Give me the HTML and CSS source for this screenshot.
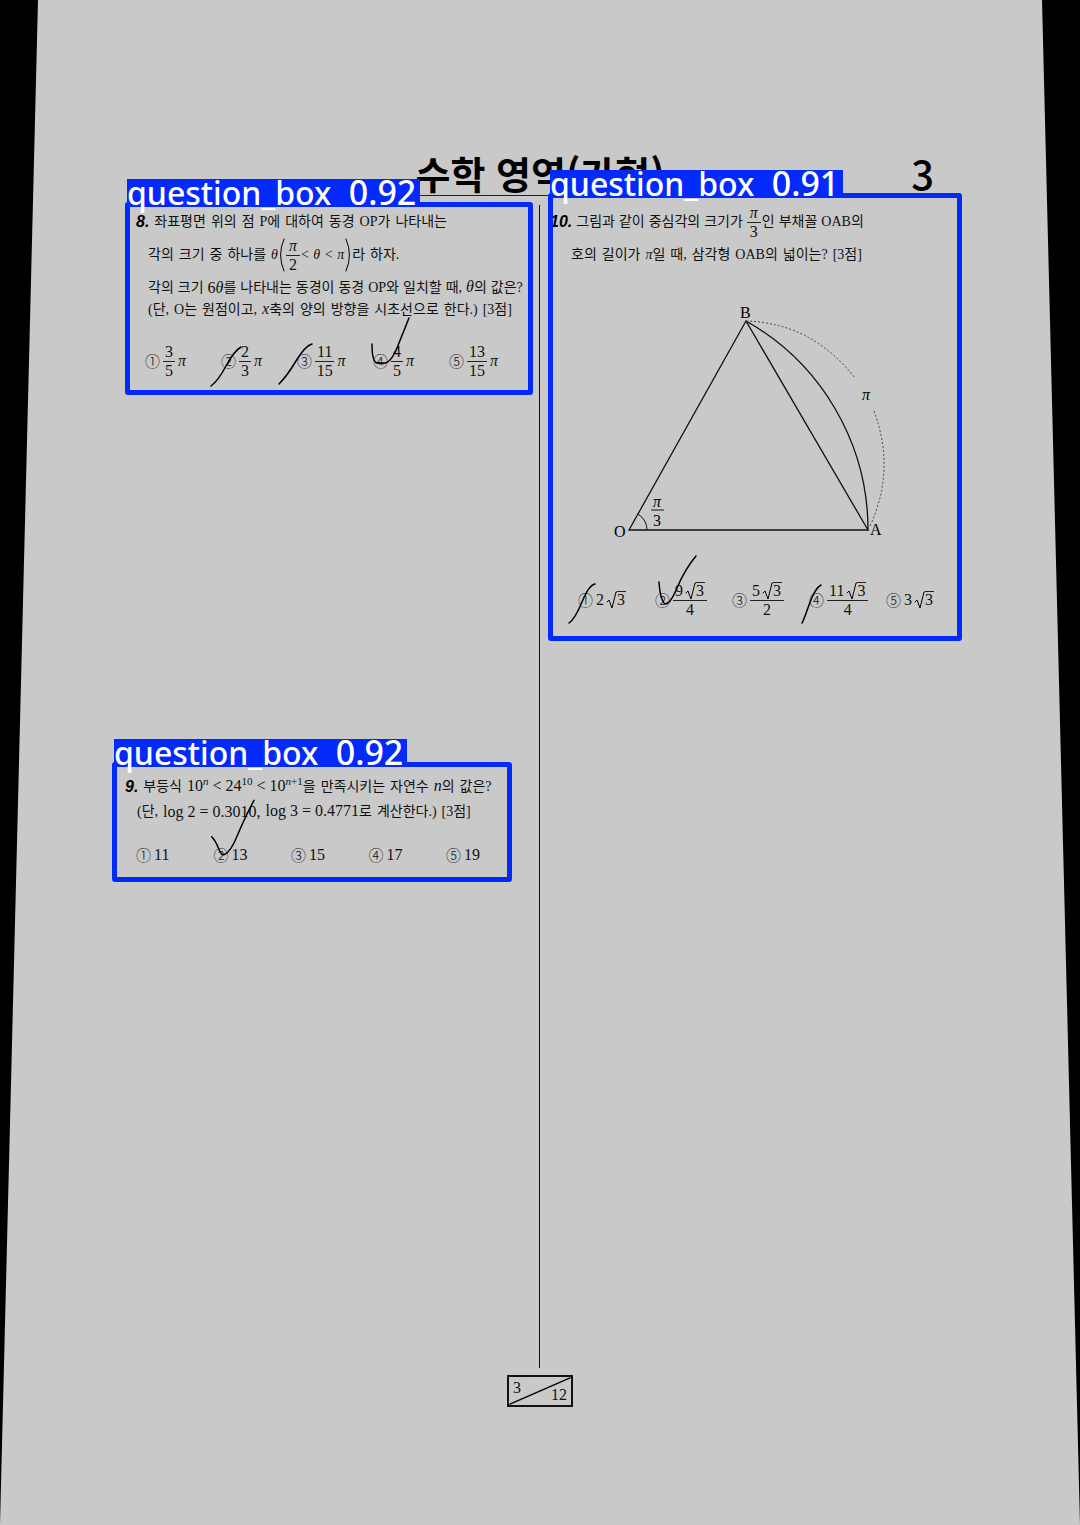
FILE: index.html
```html
<!DOCTYPE html>
<html lang="ko">
<head>
<meta charset="utf-8">
<meta name="viewport" content="width=device-width, initial-scale=1">
<title>수학 영역(가형)</title>
<link rel="stylesheet" href="styles.css">
</head>
<body>
<main class="sheet">
  <header class="head">
    <h1 class="title">수학 영역(가형)</h1>
    <span class="page-no">3</span>
  </header>
  <div class="columns">
    <div class="column column-left">
      <section class="box box-8">
        <span class="tag">question_box <span class="score">0.92</span></span>
        <p class="line lead"><b class="num">8.</b><span>좌표평면</span><span>위의</span><span>점</span><span>P에</span><span>대하여</span><span>동경</span><span>OP가</span><span>나타내는</span></p>
        <p class="line tall"><span>각의</span><span>크기</span><span>중</span><span>하나를</span><span class="math"><i>θ</i><svg class="paren" viewBox="0 0 6 34"><path d="M5 1Q-2 17 5 33"/></svg><span class="frac"><i>π</i><span>2</span></span>&lt; <i>θ</i> &lt; <i>π</i><svg class="paren" viewBox="0 0 6 34"><path d="M1 1Q8 17 1 33"/></svg>라</span><span>하자.</span></p>
        <p class="line tight"><span>각의</span><span>크기</span><span class="big">6<i>θ</i></span><span class="joined">를</span><span>나타내는</span><span>동경이</span><span>동경</span><span>OP와</span><span>일치할</span><span>때,</span><span><i class="big">θ</i>의</span><span>값은?</span></p>
        <p class="line"><span>(단,</span><span>O는</span><span>원점이고,</span><span><i class="big">x</i>축의</span><span>양의</span><span>방향을</span><span>시초선으로</span><span>한다.)</span><span>[3점]</span></p>
        <ol class="choices">
          <li><span class="mark">①</span><span class="frac"><span>3</span><span>5</span></span><i>π</i></li>
          <li><span class="mark">②</span><span class="frac"><span>2</span><span>3</span></span><i>π</i></li>
          <li><span class="mark">③</span><span class="frac"><span>11</span><span>15</span></span><i>π</i></li>
          <li><span class="mark">④</span><span class="frac"><span>4</span><span>5</span></span><i>π</i></li>
          <li><span class="mark">⑤</span><span class="frac"><span>13</span><span>15</span></span><i>π</i></li>
        </ol>
        <svg class="pen" viewBox="0 0 408 193"><path d="M116 145Q109 149 101 164T86 184M187 142Q180 144 171 159T154 182M247 142Q247 160 252 161T260 161Q267 160 274 141L284 116"/></svg>
      </section>
      <section class="box box-9">
        <span class="tag">question_box <span class="score">0.92</span></span>
        <p class="line lead"><b class="num">9.</b><span>부등식</span><span><span class="big">10<sup><i>n</i></sup> &lt; 24<sup>10</sup> &lt; 10<sup><i>n</i>+1</sup></span>을</span><span>만족시키는</span><span>자연수</span><span><i class="big">n</i>의</span><span>값은?</span></p>
        <p class="line"><span>(단,</span><span class="big">log 2 = 0.3010,</span><span><span class="big">log 3 = 0.4771</span>로</span><span>계산한다.)</span><span>[3점]</span></p>
        <ol class="choices">
          <li><span class="mark">①</span>11</li>
          <li><span class="mark">②</span>13</li>
          <li><span class="mark">③</span>15</li>
          <li><span class="mark">④</span>17</li>
          <li><span class="mark">⑤</span>19</li>
        </ol>
        <svg class="pen" viewBox="0 0 400 122"><path d="M98 76Q102 80 105 88T111 94Q117 92 124 75T141 39"/></svg>
      </section>
    </div>
    <div class="column column-right">
      <section class="box box-10">
        <span class="tag">question_box <span class="score">0.91</span></span>
        <p class="line lead tight"><b class="num">10.</b><span>그림과</span><span>같이</span><span>중심각의</span><span>크기가</span><span class="math"><span class="frac"><i>π</i><span>3</span></span>인</span><span>부채꼴</span><span>OAB의</span></p>
        <p class="line"><span>호의</span><span>길이가</span><span><i>π</i>일</span><span>때,</span><span>삼각형</span><span>OAB의</span><span>넓이는?</span><span>[3점]</span></p>
        <svg class="figure" viewBox="608 300 286 245" role="img" aria-label="부채꼴 OAB">
          <path class="solid" d="M746 321L629 530H868ZA240 240 0 0 1 868 530"/>
          <path class="thin" d="M638 514Q647 520 647 530M651 510H664"/>
          <path class="dash" d="M746 321Q812 323 855 378M874 411Q896 470 870 526"/>
          <text x="740" y="318">B</text>
          <text x="614" y="537">O</text>
          <text x="870" y="535">A</text>
          <text x="862" y="400" class="var">π</text>
          <text x="653" y="507" class="var">π</text>
          <text x="653" y="526">3</text>
        </svg>
        <ol class="choices">
          <li><span class="mark">①</span><span class="surd">2<svg class="rad" viewBox="0 0 11 18"><path d="M1 11L3 9L6 17L10 1H11"/></svg><span class="root">3</span></span></li>
          <li><span class="mark">②</span><span class="frac"><span class="surd">9<svg class="rad" viewBox="0 0 11 18"><path d="M1 11L3 9L6 17L10 1H11"/></svg><span class="root">3</span></span><span>4</span></span></li>
          <li><span class="mark">③</span><span class="frac"><span class="surd">5<svg class="rad" viewBox="0 0 11 18"><path d="M1 11L3 9L6 17L10 1H11"/></svg><span class="root">3</span></span><span>2</span></span></li>
          <li><span class="mark">④</span><span class="frac"><span class="surd">11<svg class="rad" viewBox="0 0 11 18"><path d="M1 11L3 9L6 17L10 1H11"/></svg><span class="root">3</span></span><span>4</span></span></li>
          <li><span class="mark">⑤</span><span class="surd">3<svg class="rad" viewBox="0 0 11 18"><path d="M1 11L3 9L6 17L10 1H11"/></svg><span class="root">3</span></span></li>
        </ol>
        <svg class="pen" viewBox="0 0 414 448"><path d="M47 391Q41 392 34 409T21 430M111 389Q112 405 116 410Q121 414 129 395T148 363M273 392Q267 395 261 412T254 430"/></svg>
      </section>
    </div>
  </div>
  <footer class="foot">
    <div class="pager"><svg class="slash" viewBox="0 0 66 32" preserveAspectRatio="none"><path d="M1 31L65 1"/></svg><span>3</span><span class="total">12</span></div>
  </footer>
</main>
</body>
</html>
```
FILE: styles.css
```css
* { box-sizing: border-box; }

body {
  margin: 0;
  background: #000;
  color: #111;
  font: 14px/22px "Liberation Serif", "Noto Sans CJK KR", serif;
}

h1, p, ol { margin: 0; padding: 0; font-weight: inherit; }

.sheet {
  display: flex;
  flex-direction: column;
  min-height: 100vh;
  background: #c9c9c9;
  clip-path: polygon(38px 0, calc(100% - 38px) 0, 100% 100%, 0 100%);
}

.head {
  display: grid;
  grid-template-columns: 1fr auto 1fr;
  align-items: center;
  margin: 0 128px;
  padding-top: 151px;
  border-bottom: 1px solid #222;
  font-family: "Noto Sans CJK KR", sans-serif;
  line-height: 44px;
}
.title { grid-column: 2; font-size: 38px; font-weight: 700; color: #000; }
.page-no { justify-self: end; margin-right: 18px; font-size: 40px; font-weight: 500; color: #000; }

.columns {
  display: grid;
  grid-template-columns: minmax(0, 1fr) minmax(0, 1fr);
  flex: 1;
  margin-top: 9px;
}
.column-left { border-right: 1px solid #111; }

.box { position: relative; }
.box::after {
  content: "";
  position: absolute;
  inset: 0;
  border: 5px solid #0429fb;
  border-radius: 3px;
}
.box-8 { margin: -3px 6px 0 125px; padding: 9px 0 14px; }
.box-9 { margin: 367px 27px 0 112px; padding: 12px 0 16px; }
.box-10 { margin: -12px 118px 0 8px; padding: 10px 0 21px; }

.tag {
  position: absolute;
  z-index: 1;
  left: 2px;
  top: -23px;
  height: 28px;
  padding-right: 4px;
  background: #0429fb;
  color: #fff;
  font: 500 32px/26px "Noto Sans", sans-serif;
  white-space: nowrap;
}
.score { margin-left: 9px; font-size: 34px; }

.line {
  display: flex;
  align-items: center;
  gap: 5px;
  padding-left: 23px;
  white-space: nowrap;
}
.tall { height: 44px; }
.lead { padding-left: 11px; }
.tight { gap: 4px; }
.joined { margin-left: -4px; }
.num { font: italic 700 16px/22px "Liberation Sans", sans-serif; color: #000; }
.box-9 .line { padding-left: 25px; line-height: 25px; }
.box-9 .lead { padding-left: 13px; }
.box-10 .line { height: 28px; padding-left: 23px; }
.box-10 .lead { height: 38px; padding-left: 2px; }

.big { font-size: 16px; line-height: 20px; }
.math { display: inline-flex; align-items: center; gap: 1px; white-space: pre; }
.paren { width: 6px; height: 34px; }
.frac {
  display: inline-flex;
  flex-direction: column;
  align-items: center;
  font-size: 16px;
  line-height: 18px;
}
.frac > :first-child { padding: 0 2px; border-bottom: 1px solid #222; }
.frac > i { min-width: 14px; text-align: center; }
sup { font-size: 11px; line-height: 10px; }

.choices {
  display: grid;
  grid-template-columns: repeat(4, 1fr) 48px;
  list-style: none;
  font-size: 16px;
}
.choices li { display: flex; align-items: center; gap: 3px; white-space: nowrap; }
.mark { font: 300 15px/20px "Noto Sans CJK KR", sans-serif; }
.box-8 .choices { height: 40px; margin: 20px 36px 0 20px; }
.box-9 .choices { height: 22px; margin: 20px 18px 0 24px; }
.box-10 .choices { height: 40px; margin: 35px 28px 0 30px; }

.surd { display: inline-flex; align-items: center; line-height: 18px; }
.rad { width: 11px; height: 18px; margin-left: 2px; }
.root { height: 18px; padding-right: 1px; background: linear-gradient(#222, #222) 0 0 / 100% 1px no-repeat; }

.figure { display: block; width: 286px; height: 245px; margin: 31px 0 0 60px; font-size: 16px; }
.figure path { fill: none; stroke: #111; }
.figure .thin { stroke-width: 1; }
.figure .solid { stroke-width: 1.3; }
.figure .dash { stroke: #444; stroke-width: 1; stroke-dasharray: 2 2; }
.figure .var { font-style: italic; }

.pen { position: absolute; inset: 0; width: 100%; height: 100%; pointer-events: none; }
.pen path, .paren path, .slash path, .rad path { fill: none; stroke: #000; stroke-width: 1.5; stroke-linecap: round; }
.paren path, .rad path { stroke-width: 1; }

.foot { display: flex; justify-content: center; padding: 7px 0 118px; }
.pager {
  position: relative;
  display: flex;
  justify-content: space-between;
  width: 66px;
  height: 32px;
  padding: 0 4px;
  border: 2px solid #111;
  font-size: 16px;
}
.total { align-self: flex-end; line-height: 20px; }
.slash { position: absolute; inset: 0; width: 100%; height: 100%; }
```
